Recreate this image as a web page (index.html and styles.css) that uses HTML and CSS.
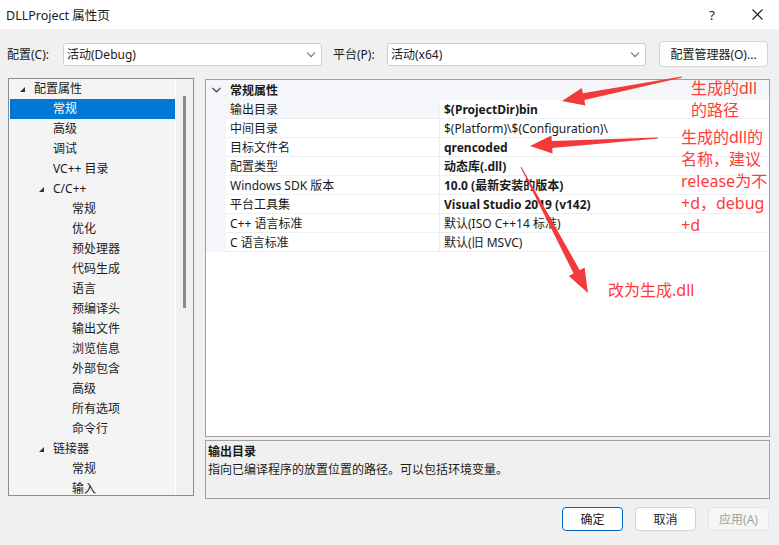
FILE: index.html
```html
<!DOCTYPE html>
<html lang="zh-CN">
<head>
    <meta charset="UTF-8">
    <title>DLLProject 属性页</title>
    <link rel="stylesheet" href="styles.css">
</head>
<body>
<div class="dlg">
    <!--标题栏-->
    <div class="titlebar">
        <span class="title">DLLProject 属性页</span>
        <span class="tb-help">?</span>
        <span class="tb-close">
            <svg width="11" height="11" viewBox="0 0 11 11"><path d="M0.5 0.5L10.5 10.5M10.5 0.5L0.5 10.5" stroke="#1f1f1f" stroke-width="1.1" fill="none"/></svg>
        </span>
    </div>

    <!--配置 / 平台-->
    <div class="toolbar">
        <span class="lbl">配置(C):</span>
        <div class="combo combo-cfg">活动(Debug)<i class="chev"></i></div>
        <span class="lbl lbl-plat">平台(P):</span>
        <div class="combo combo-plat">活动(x64)<i class="chev"></i></div>
        <button type="button" class="btn btn-mgr">配置管理器(O)...</button>
    </div>

    <div class="main">
        <!--左侧树-->
        <div class="tree">
            <ul class="tree-list">
                <li class="row lvl0"><i class="twist"></i>配置属性</li>
                <li class="row lvl1 sel">常规</li>
                <li class="row lvl1">高级</li>
                <li class="row lvl1">调试</li>
                <li class="row lvl1">VC++ 目录</li>
                <li class="row lvl1t"><i class="twist"></i>C/C++</li>
                <li class="row lvl2">常规</li>
                <li class="row lvl2">优化</li>
                <li class="row lvl2">预处理器</li>
                <li class="row lvl2">代码生成</li>
                <li class="row lvl2">语言</li>
                <li class="row lvl2">预编译头</li>
                <li class="row lvl2">输出文件</li>
                <li class="row lvl2">浏览信息</li>
                <li class="row lvl2">外部包含</li>
                <li class="row lvl2">高级</li>
                <li class="row lvl2">所有选项</li>
                <li class="row lvl2">命令行</li>
                <li class="row lvl1t"><i class="twist"></i>链接器</li>
                <li class="row lvl2">常规</li>
                <li class="row lvl2">输入</li>
            </ul>
            <div class="tree-scroll"><div class="thumb"></div></div>
        </div>

        <!--右侧属性表-->
        <div class="right">
            <div class="grid">
                <div class="cat">
                    <span class="cat-chev"><svg width="9" height="6" viewBox="0 0 9 6"><path d="M0.5 0.8L4.5 4.8L8.5 0.8" stroke="#333" stroke-width="1.2" fill="none"/></svg></span>
                    <span class="cat-name">常规属性</span>
                </div>
                <div class="prop cur"><span class="pm"></span><span class="pn">输出目录</span><span class="pv b">$(ProjectDir)bin</span></div>
                <div class="prop"><span class="pm"></span><span class="pn">中间目录</span><span class="pv">$(Platform)\$(Configuration)\</span></div>
                <div class="prop"><span class="pm"></span><span class="pn">目标文件名</span><span class="pv b">qrencoded</span></div>
                <div class="prop"><span class="pm"></span><span class="pn">配置类型</span><span class="pv b">动态库(.dll)</span></div>
                <div class="prop"><span class="pm"></span><span class="pn">Windows SDK 版本</span><span class="pv b">10.0 (最新安装的版本)</span></div>
                <div class="prop"><span class="pm"></span><span class="pn">平台工具集</span><span class="pv b">Visual Studio 2019 (v142)</span></div>
                <div class="prop"><span class="pm"></span><span class="pn">C++ 语言标准</span><span class="pv">默认(ISO C++14 标准)</span></div>
                <div class="prop"><span class="pm"></span><span class="pn">C 语言标准</span><span class="pv">默认(旧 MSVC)</span></div>
            </div>
            <div class="desc">
                <div class="desc-t">输出目录</div>
                <div class="desc-b">指向已编译程序的放置位置的路径。可以包括环境变量。</div>
            </div>
        </div>
    </div>

    <div class="footer">
        <button type="button" class="btn btn-ok">确定</button>
        <button type="button" class="btn">取消</button>
        <button type="button" class="btn btn-off">应用(A)</button>
    </div>

    <!--标注-->
    <svg class="marks" width="779" height="545" viewBox="0 0 779 545">
        <polygon fill="#f23a3a" points="681.9,76.5 582.9,93.3 581.8,87.9 562,101 585.4,105.5 584.3,100.1 682.1,77.5"/>
        <polygon fill="#f23a3a" points="658,137.5 551.8,141.1 551.4,135.6 530,146 552.6,153.6 552.2,148.1 658,138.5"/>
        <polygon fill="#f23a3a" points="520.6,167.2 573.6,273.4 568.8,276 588,293 584.6,267.6 579.8,270.2 521.4,166.8"/>
    </svg>
    <div class="note note1">生成的dll<br>的路径</div>
    <div class="note note2">生成的dll的<br>名称，建议<br>release为不<br>+d，debug<br>+d</div>
    <div class="note note3">改为生成.dll</div>
</div>
</body>
</html>
```

FILE: styles.css
```css
html,body{ margin: 0; padding: 0;}
body{ width: 779px; height: 545px; overflow: hidden; background: #f0f0f0;
    font-family: "Noto Sans", "Noto Sans CJK SC", sans-serif; font-size: 12px; color: #1a1a1a;}
ul,li{ list-style: none; padding: 0; margin: 0;}
.dlg{ position: relative; width: 779px; height: 545px;}

/* title */
.titlebar{ height: 29px; background: #fff; display: flex; align-items: center;}
.title{ padding-left: 6px; flex: 1; font-size: 12.5px;}
.tb-help{ width: 12px; margin-right: 34px; font-size: 13px; text-align: center;}
.tb-close{ width: 11px; height: 11px; margin-right: 16px; display: flex;}

/* toolbar */
.toolbar{ height: 49px; display: flex; align-items: center; padding: 0 0 0 7px; box-sizing: border-box;}
.lbl{ width: 56px;}
.lbl-plat{ margin-left: 11px; width: 54px;}
.combo{ position: relative; width: 259px; height: 23px; line-height: 21px; box-sizing: border-box; background: #fff;
    border: 1px solid #cfcfcf; border-radius: 3px; padding-left: 3px; margin-top: 1px;}
.chev{ position: absolute; right: 7px; top: 6px; width: 5px; height: 5px; border-right: 1px solid #666; border-bottom: 1px solid #666; transform: rotate(45deg);}
.btn{ font-family: inherit; font-size: 12px; color: #1a1a1a; background: #fdfdfd; border: 1px solid #d3d3d3; border-radius: 4px; padding: 0;}
.btn-mgr{ margin-left: 13px; width: 109px; height: 26px;}

/* main */
.main{ display: flex; padding-left: 8px; height: 429px;}
.tree{ width: 186px; height: 418px; box-sizing: border-box; border: 1px solid #8a8d93; background: #f4f4f4; display: flex; padding: 0 0 0 1px;}
.tree-list{ flex: 1; overflow: hidden; border-right: 1px solid #fff;}
.row{ height: 20px; line-height: 20px; white-space: nowrap;}
.twist{ display: inline-block; width: 14px; height: 7px; position: relative;}
.twist::before{ content: ""; position: absolute; left: 0; top: 1px; width: 0; height: 0; border-left: 5px solid transparent; border-bottom: 5px solid #333;}
.lvl0{ padding-left: 10px;}
.lvl1{ padding-left: 43px;}
.lvl1t{ padding-left: 29px;}
.lvl2{ padding-left: 62px;}
.sel{ background: #0078d4; color: #fff;}
.tree-scroll{ width: 17px; background: #f1f1f1;}
.thumb{ width: 3px; height: 212px; margin: 17px 0 0 7px; background: #8a8a8a; border-radius: 1px;}

.right{ margin-left: 11px; width: 565px; display: flex; flex-direction: column;}
.grid{ height: 358px; box-sizing: border-box; border: 1px solid #a0a0a0; background: #fff; margin-top: 1px;}
.cat{ height: 20px; display: flex; align-items: center; background: #f4f6f9;}
.cat-chev{ width: 20px; display: flex; justify-content: center;}
.cat-name{ padding-left: 4px; font-weight: bold;}
.prop{ height: 19px; display: grid; grid-template-columns: 20px 214px 1fr;}
.prop span{ line-height: 19px; border-bottom: 1px solid #eceff3; white-space: nowrap; overflow: hidden; box-sizing: border-box;}
.pm{ background: #f4f6f9; border-bottom-color: #f4f6f9 !important;}
.pn{ padding-left: 4px; border-right: 1px solid #eceff3;}
.pv{ padding-left: 4px;}
.pv.b{ font-weight: bold;}
.cur .pn{ background: #f4f6f9;}

.desc{ margin-top: 3px; height: 59px; box-sizing: border-box; border: 1px solid #a0a0a0; background: #f0f0f0; padding: 2px 0 0 2px;}
.desc-t{ font-weight: bold; line-height: 18px;}
.desc-b{ line-height: 18px;}

/* footer */
.footer{ display: flex; justify-content: flex-end; padding-right: 10px; gap: 12px;}
.footer .btn{ width: 61px; height: 24px; background: #fff;}
.btn-ok{ border-color: #0067c0 !important;}
.btn-off{ background: #f6f6f6 !important; border-color: #e5e5e5 !important; color: #a0a0a0 !important;}

/* annotations */
.marks{ position: absolute; left: 0; top: 0; pointer-events: none;}
.note{ position: absolute; color: #ff3b3b; font-family: "Noto Sans", "Noto Sans CJK SC", sans-serif; font-size: 16px; line-height: 22px;}
.note1{ left: 691px; top: 77px;}
.note2{ left: 681px; top: 126px;}
.note3{ left: 608px; top: 279px;}
```
